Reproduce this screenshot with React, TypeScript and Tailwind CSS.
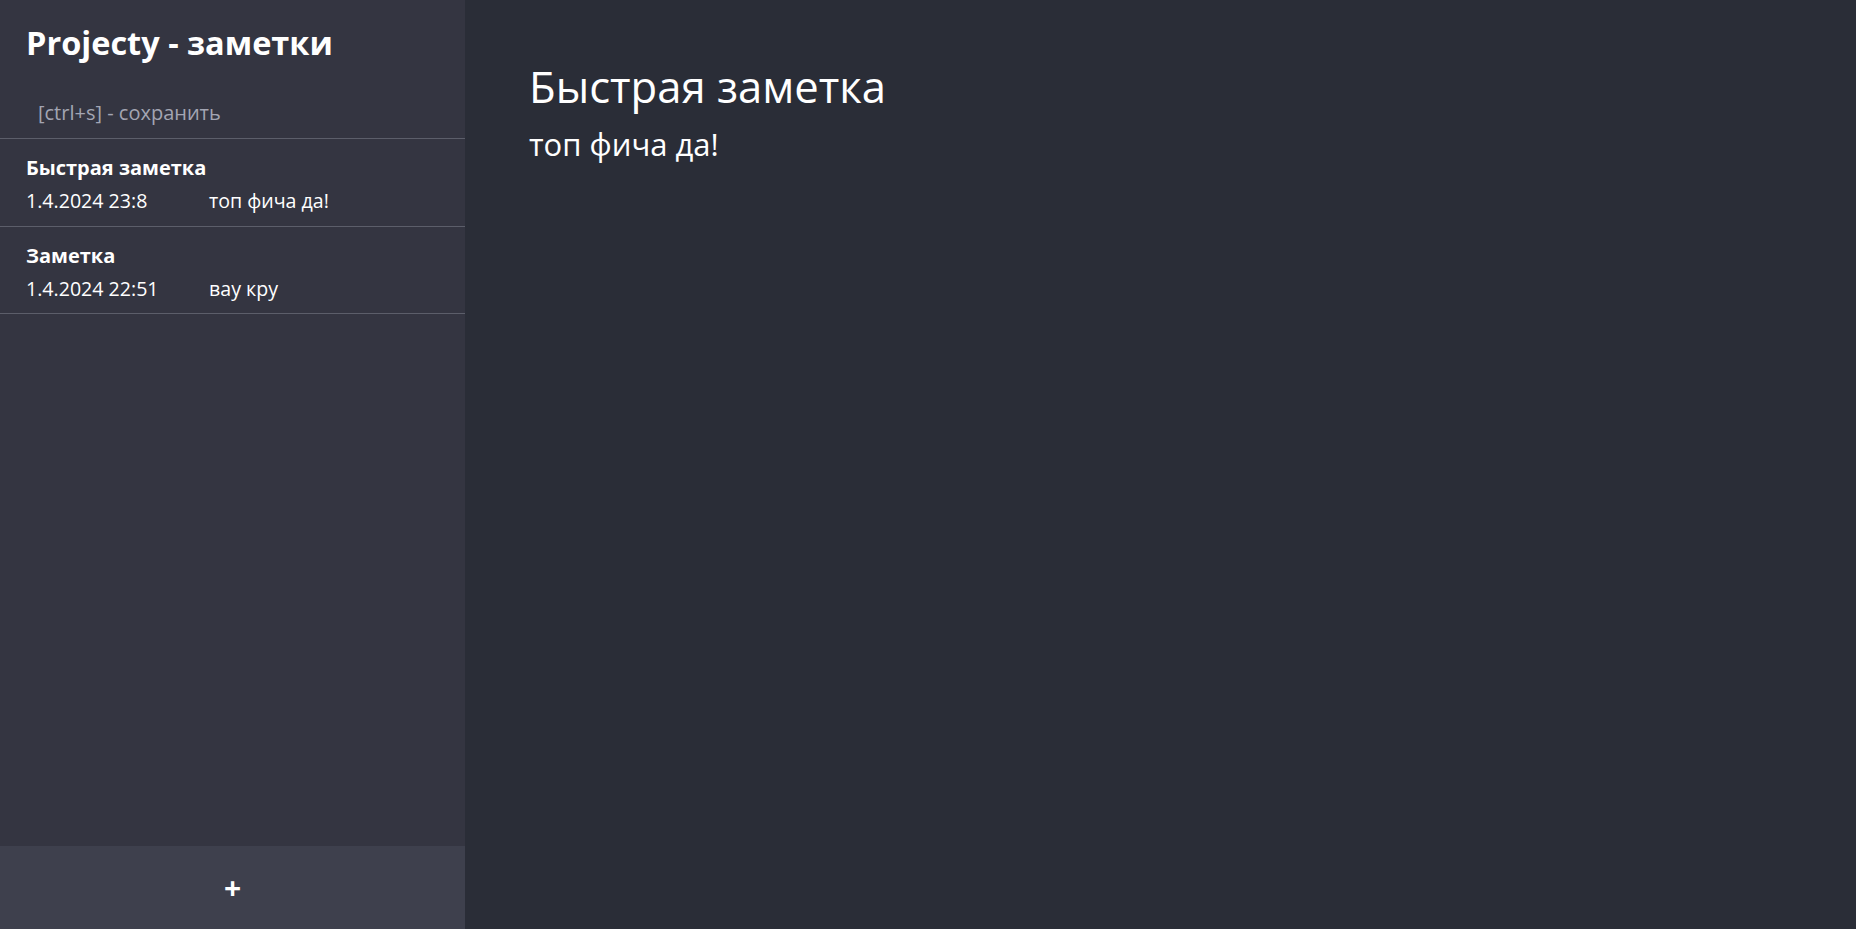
export default function App() {
  const notes = [
    { id: 1, title: "Быстрая заметка", date: "1.4.2024 23:8", text: "топ фича да!" },
    { id: 2, title: "Заметка", date: "1.4.2024 22:51", text: "вау кру" },
  ];

  return (
    <div className="flex h-[929px] w-full font-['Open_Sans',sans-serif] text-white">
      <aside className="flex w-[465px] shrink-0 flex-col bg-[#343541]">
        <h1 className="px-[26px] pt-[20px] text-[32.5px] font-bold leading-[46px]">Projecty - заметки</h1>
        <div className="px-[38px] pt-[33px] pb-[11px] text-[20px] leading-[28px] text-[#a3a5b3]">[ctrl+s] - сохранить</div>
        <div className="flex-1">
          {notes.map((note) => (
            <div key={note.id} className="h-[88px] border-t border-[#5c5e6a] px-[26px] pt-[12px] last:border-b">
              <div className="text-[20px] font-bold leading-[33px]">{note.title}</div>
              <div className="flex text-[19.6px] leading-[33px]">
                <span className="w-[183px] shrink-0">{note.date}</span>
                <span>{note.text}</span>
              </div>
            </div>
          ))}
        </div>
        <button className="flex h-[83px] items-center justify-center bg-[#3e404d] text-[30px] font-bold">+</button>
      </aside>
      <main className="flex-1 bg-[#2a2d37] px-[64px] pt-[53px]">
        <div className="text-[43.6px] leading-[66px]">Быстрая заметка</div>
        <div className="text-[31px] leading-[50px]">топ фича да!</div>
      </main>
    </div>
  );
}
